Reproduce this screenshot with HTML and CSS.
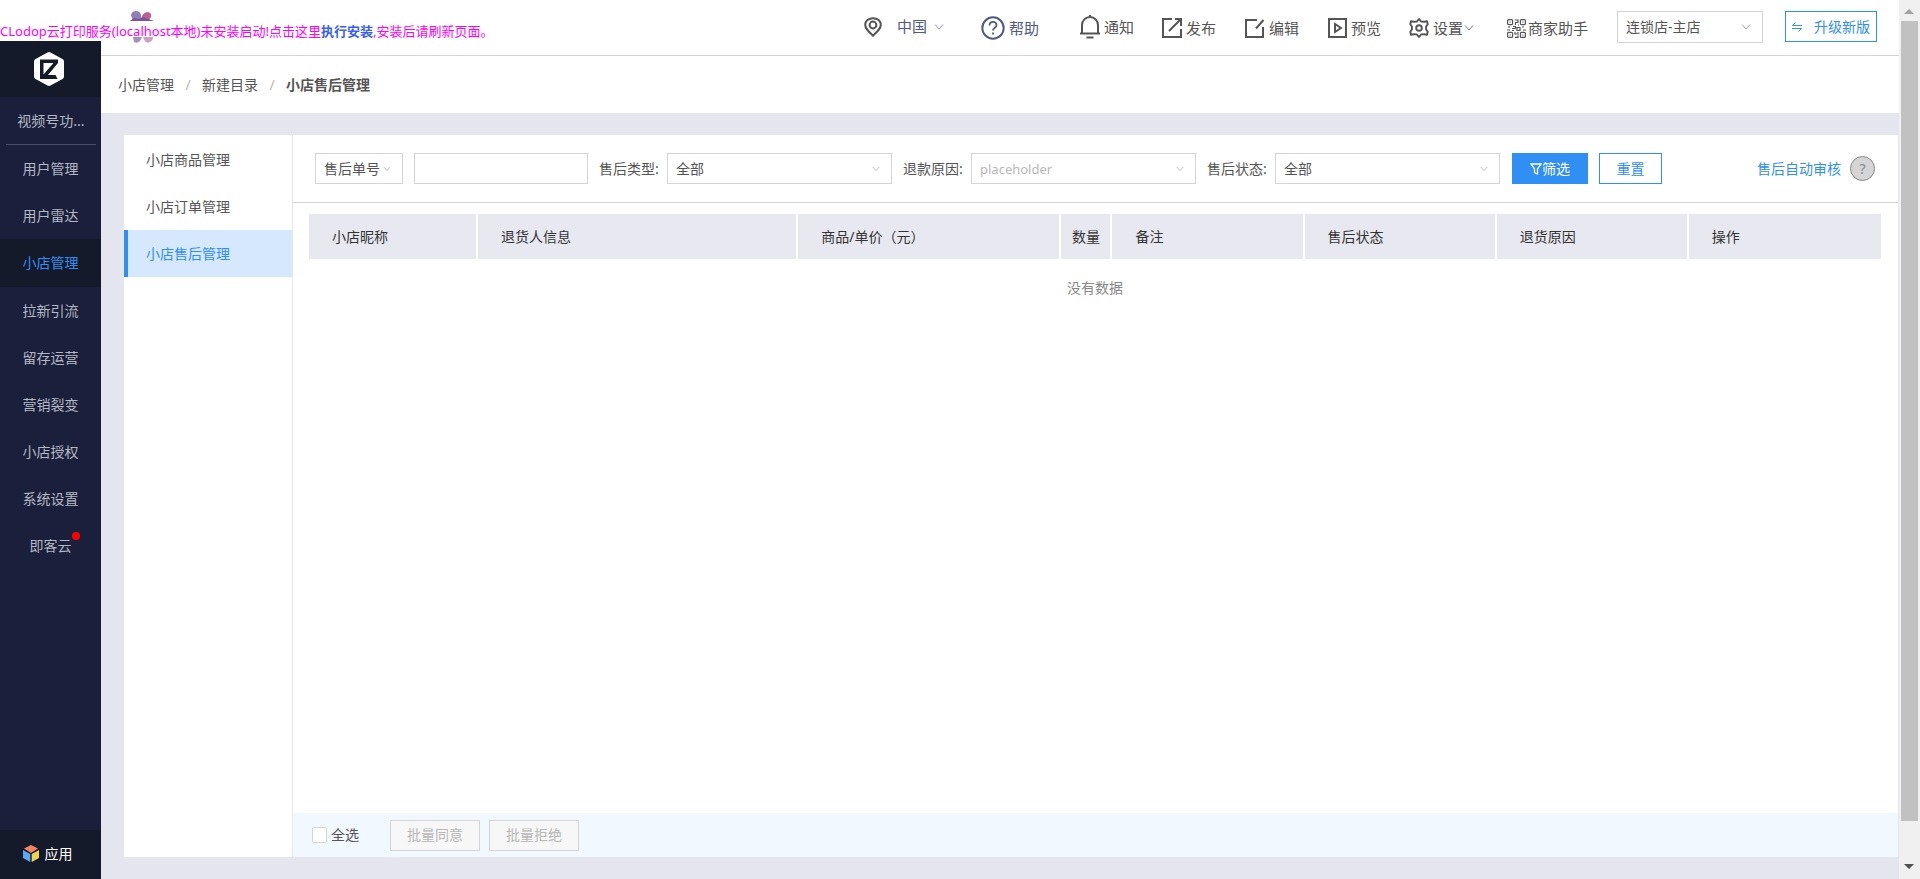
FILE: index.html
```html
<!DOCTYPE html>
<html lang="zh-CN">
<head>
<meta charset="utf-8">
<title>小店售后管理</title>
<link rel="stylesheet" href="styles.css">
</head>
<body>
<div class="app">
  <aside class="sidebar">
    <div class="logo">
      <svg width="30" height="34" viewBox="0 0 30 34"><path d="M13.500.500q1.500-.800 3 0L28.500 7Q30 7.800 30 9.500v15q0 1.700-1.500 2.500l-12 6.500q-1.500.800-3 0L1.500 27Q0 26.200 0 24.500v-15Q0 7.800 1.500 7z" fill="#fff"/><path d="M7 7.500h17v3.500L14 23h7.500l2 4H6V7.500z" fill="#141a29"/><path d="M9.500 11h10L9.500 22.500z" fill="#fff"/></svg>
    </div>
    <nav class="main-nav">
      <a class="nav-item nav-top" href="#">视频号功...</a>
      <a class="nav-item" href="#">用户管理</a>
      <a class="nav-item" href="#">用户雷达</a>
      <a class="nav-item active" href="#">小店管理</a>
      <a class="nav-item" href="#">拉新引流</a>
      <a class="nav-item" href="#">留存运营</a>
      <a class="nav-item" href="#">营销裂变</a>
      <a class="nav-item" href="#">小店授权</a>
      <a class="nav-item" href="#">系统设置</a>
      <a class="nav-item" href="#"><span class="dotted">即客云</span></a>
    </nav>
    <a class="apps" href="#">
      <svg width="16" height="17" viewBox="0 0 16 17"><path d="M8 0l7 3.500L8 8 1 3.500z" fill="#f4845f"/><path d="M0 5l7.300 4v8L0 13z" fill="#5aa9f7"/><path d="M16 5L8.700 9v8L16 13z" fill="#ecd64f"/></svg>
      应用
    </a>
  </aside>

  <div class="page">
    <header class="topbar">
      <button class="tool region" type="button">
        <svg width="18" height="20" viewBox="0 0 18 20" fill="none" stroke="#555" stroke-width="2"><path d="M9 18.700C4 14 1.200 11.500 1.200 7.800 1.200 4 4.500 1.200 9 1.200s7.800 2.800 7.800 6.600c0 3.700-2.800 6.200-7.800 10.900z"/><circle cx="9" cy="8" r="3.400"/></svg>
        <span class="region-name">中国</span>
        <svg class="chev" width="10" height="6" viewBox="0 0 10 6"><path d="M1 .500l4 4.500 4-4.500"/></svg>
      </button>
      <button class="tool help" type="button">
        <svg width="24" height="24" viewBox="0 0 24 24" fill="none" stroke="#525a80"><circle cx="12" cy="12" r="10.700" stroke-width="2"/><path d="M8.500 9.500C8.500 4.500 15.500 4.800 15.500 9c0 2.600-3.500 2.800-3.500 5.500M12 16.500v2" stroke-width="1.800"/></svg>
        帮助
      </button>
      <button class="tool notice" type="button">
        <svg width="20" height="24" viewBox="0 0 20 24" fill="none" stroke="#555" stroke-width="2"><path d="M2 18.500V10a8 8 0 0 1 16 0v8.500M0 18.500h20M10 0v3M6.500 22.500h7"/></svg>
        通知
      </button>
      <button class="tool publish" type="button">
        <svg width="20" height="20" viewBox="0 0 20 20" fill="none" stroke="#555" stroke-width="2"><path d="M10 1H1v18h18v-8M13 1h6v7M18.500 1.500L7 13"/></svg>
        发布
      </button>
      <button class="tool edit" type="button">
        <svg width="20" height="20" viewBox="0 0 20 20" fill="none" stroke="#555" stroke-width="2"><path d="M12 2H1v17h17V9M18.500 2L11 10.500"/></svg>
        编辑
      </button>
      <button class="tool preview" type="button">
        <svg width="19" height="20" viewBox="0 0 19 20" fill="none" stroke="#555" stroke-width="2"><path d="M1 1h17v18H1zM7 6l6 4-6 4z"/></svg>
        预览
      </button>
      <button class="tool setting" type="button">
        <svg width="20" height="20" viewBox="0 0 20 20" fill="none" stroke="#555" stroke-width="1.900" stroke-linejoin="round"><path d="M10 1l2.200 2.600 2.800.200 3-.500.700 2.900-1.600 2.300v3l1.600 2.300-.700 2.900-3-.500-2.800.200L10 19l-2.200-2.600-2.800-.200-3 .500-.700-2.900 1.600-2.300v-3L1.300 6.200 2 3.300l3 .500 2.800-.200z"/><circle cx="10" cy="10" r="2.800"/></svg>
        <span>设置</span>
        <svg class="chev" width="10" height="6" viewBox="0 0 10 6"><path d="M1 .500l4 4.500 4-4.500"/></svg>
      </button>
      <button class="tool helper" type="button">
        <svg width="19" height="19" viewBox="0 0 19 19" fill="none" stroke="#555" stroke-width="1.200"><rect x=".600" y=".600" width="5" height="5" rx="1"/><rect x="13.400" y=".600" width="5" height="5" rx="1"/><rect x=".600" y="13.400" width="5" height="5" rx="1"/><rect x="13.400" y="13.400" width="5" height="5" rx="1"/><path d="M2.500 3h1.200M15.300 3h1.200M2.500 16h1.200M15.300 16h1.200M8 1h3v2.500H8.500V6M11 6h1M1 8h2M6 7.500h2.500v2H5M0 11h3M5 11.500h2M10 8.500h3v3h-3zM15 8h2M16 11h3M8 13v2h3v-2M8 18.300h3v-2"/></svg>
        商家助手
      </button>
      <span class="select store">
        <select aria-label="店铺"><option>连锁店-主店</option></select>
        <svg class="chev" width="10" height="6" viewBox="0 0 10 6"><path d="M1 .500l4 4.500 4-4.500"/></svg>
      </span>
      <button class="btn upgrade" type="button">
        <svg width="10" height="10" viewBox="0 0 10 10" fill="none" stroke="#2f8ff2"><path d="M3.500.500L.500 3.500H10M0 6.500h9.500l-3 3"/></svg>
        升级新版
      </button>
    </header>

    <nav class="crumbs" aria-label="面包屑">
      <a href="#">小店管理</a><span class="sep">/</span><a href="#">新建目录</a><span class="sep">/</span><strong>小店售后管理</strong>
    </nav>

    <main class="panel">
      <nav class="sub-nav">
        <a href="#">小店商品管理</a>
        <a href="#">小店订单管理</a>
        <a class="active" href="#">小店售后管理</a>
      </nav>
      <section class="content">
        <form class="filters">
          <span class="select kind">
            <select aria-label="单号类型"><option>售后单号</option></select>
            <svg class="chev" width="8" height="6" viewBox="0 0 10 6"><path d="M1 .500l4 4.500 4-4.500"/></svg>
          </span>
          <input class="number" type="text" aria-label="售后单号">
          <label for="type">售后类型:</label>
          <span class="select wide">
            <select id="type"><option>全部</option></select>
            <svg class="chev" width="8" height="6" viewBox="0 0 10 6"><path d="M1 .500l4 4.500 4-4.500"/></svg>
          </span>
          <label for="reason">退款原因:</label>
          <span class="select wide empty">
            <select id="reason"><option>placeholder</option></select>
            <svg class="chev" width="8" height="6" viewBox="0 0 10 6"><path d="M1 .500l4 4.500 4-4.500"/></svg>
          </span>
          <label for="state">售后状态:</label>
          <span class="select wide">
            <select id="state"><option>全部</option></select>
            <svg class="chev" width="8" height="6" viewBox="0 0 10 6"><path d="M1 .500l4 4.500 4-4.500"/></svg>
          </span>
          <button class="btn primary" type="button">
            <svg width="12" height="12" viewBox="0 0 12 12" fill="none" stroke="#fff" stroke-width="1.300"><path d="M1 1h10L7.500 6v5l-3-1.500V6z"/></svg>筛选
          </button>
          <button class="btn reset" type="reset">重置</button>
          <a class="auto" href="#">售后自动审核</a>
          <button class="tip" type="button" aria-label="帮助说明">?</button>
        </form>
        <div class="table-wrap">
          <table>
            <colgroup><col class="c-shop"><col class="c-user"><col class="c-goods"><col class="c-count"><col class="c-std"><col class="c-std"><col class="c-std"><col class="c-std"></colgroup>
            <thead>
              <tr><th>小店昵称</th><th>退货人信息</th><th>商品/单价（元）</th><th class="center">数量</th><th>备注</th><th>售后状态</th><th>退货原因</th><th>操作</th></tr>
            </thead>
            <tbody><tr><td colspan="8">没有数据</td></tr></tbody>
          </table>
        </div>
        <footer class="batch">
          <label class="check-all"><input type="checkbox">全选</label>
          <button class="btn" type="button" disabled>批量同意</button>
          <button class="btn" type="button" disabled>批量拒绝</button>
        </footer>
      </section>
    </main>
  </div>

  <div class="scrollbar" aria-hidden="true">
    <svg width="10" height="5" viewBox="0 0 10 5"><path d="M5 0l5 5H0z" fill="#a3a3a3"/></svg>
    <div class="thumb"></div>
    <svg width="10" height="5" viewBox="0 0 10 5"><path d="M0 0h10L5 5z" fill="#505050"/></svg>
  </div>

  <svg class="flower" width="24" height="34" viewBox="0 0 24 34"><path d="M1 5Q2 1 6 1q4 0 5 4v4l-3 1H4Q1 8 1 5z" fill="#8f7fbd"/><path d="M12 6q2-4 6-4 4 1 3 5l-2 3h-8z" fill="#c05f95"/><path d="M0 11l4-3 5 1 4-2 5 2 6 2z" fill="#7d5296"/><path d="M3 27h9l-2 4q-3 3-6 1z" fill="#a78fc4"/><path d="M13 27h10q0 4-4 5.500-4 1-6-5.500z" fill="#cf9fc4"/></svg>
  <p class="print-notice">CLodop云打印服务(localhost本地)未安装启动!点击这里<a href="#">执行安装</a>,安装后请刷新页面。</p>
</div>
</body>
</html>
```

FILE: styles.css
```css
* { box-sizing: border-box; }

body {
  margin: 0;
  font: 14px/20px "Noto Sans", "Noto Sans CJK SC", sans-serif;
  color: #555;
  background: #fff;
}

a { color: inherit; text-decoration: none; }

button, input, select { font: inherit; color: inherit; margin: 0; }

.app {
  position: relative;
  display: grid;
  grid-template-columns: 101px minmax(0, 1fr) 21px;
  min-height: 100vh;
}

/* sidebar */
.sidebar {
  display: flex;
  flex-direction: column;
  margin-top: 41px;
  background: #1a203b;
  color: #b4b8c3;
}

.logo {
  display: flex;
  align-items: center;
  justify-content: center;
  height: 56px;
  padding-right: 3px;
  background: #141a29;
}

.main-nav { flex: 1; }

.nav-item {
  display: flex;
  align-items: center;
  justify-content: center;
  height: 47px;
}

.nav-top {
  height: 48px;
  margin: 0 5px 0 6px;
  border-bottom: 1px solid #4a506a;
}

.nav-item.active { height: 48px; background: #141a29; color: #2f8ff2; }

.dotted { position: relative; }

.dotted::after {
  content: "";
  position: absolute;
  top: -4px;
  right: -8px;
  width: 8px;
  height: 8px;
  border-radius: 50%;
  background: #f00;
}

.apps {
  display: flex;
  align-items: center;
  justify-content: center;
  gap: 6px;
  height: 49px;
  padding-right: 6px;
  padding-bottom: 2px;
  background: #141a29;
  color: #fff;
}

/* header */
.page { display: flex; flex-direction: column; background: #e5e5ef; }

.topbar {
  display: flex;
  align-items: flex-start;
  justify-content: flex-end;
  height: 56px;
  padding: 11px 22px 0 0;
  border-bottom: 1px solid #d5d5d5;
  background: #fff;
}

.tool {
  display: flex;
  align-items: center;
  gap: 4px;
  height: 34px;
  padding: 0;
  border: 0;
  background: none;
  font-size: 15px;
  white-space: nowrap;
}

.region { height: 32px; margin-right: 37px; color: #525a80; }
.region-name { margin: 0 3px 2px 11px; }
.help { margin-right: 41px; color: #525a80; }
.notice { height: 32px; margin-right: 28px; }
.publish, .edit { margin-right: 29px; }
.preview { margin-right: 28px; }
.setting { margin-right: 33px; }
.setting .chev { margin-left: -3px; }
.helper { gap: 2px; margin-right: 29px; }

.chev { fill: none; stroke: #aaa; stroke-width: 1; }
.region .chev { stroke: #8f96b5; }
.setting .chev { stroke: #777; }

.select { position: relative; display: flex; }

.select select, .number {
  width: 100%;
  height: 31px;
  padding: 0 8px;
  border: 1px solid #d5d5d5;
  border-radius: 0;
  background: #fff;
  appearance: none;
}

.select .chev { position: absolute; right: 12px; top: 13px; pointer-events: none; }

.store { width: 146px; margin-right: 22px; }
.store select { height: 32px; }

.btn {
  height: 31px;
  padding: 0;
  border: 1px solid #2f8ff2;
  background: #fff;
  color: #2f8ff2;
  white-space: nowrap;
}

.upgrade { display: flex; align-items: center; justify-content: center; gap: 12px; width: 92px; }

.crumbs {
  display: flex;
  align-items: center;
  height: 57px;
  padding: 1px 0 0 17px;
  background: #fff;
}

.crumbs .sep { width: 28px; text-align: center; color: #b5b5b5; }
.crumbs strong { font-weight: 600; }

/* panel */
.panel {
  flex: 1;
  display: flex;
  margin: 22px 1px 22px 23px;
  background: #fff;
}

.sub-nav { width: 169px; padding-top: 1px; border-right: 1px solid #e5e5ef; }

.sub-nav a {
  display: flex;
  align-items: center;
  height: 47px;
  padding-left: 18px;
  border-left: 4px solid transparent;
}

.sub-nav a.active { border-color: #2f8ff2; background: #d5e8fd; color: #2f8ff2; }

.content { flex: 1; display: flex; flex-direction: column; min-width: 0; }

.filters {
  display: flex;
  align-items: center;
  height: 68px;
  padding: 0 23px 0 22px;
  border-bottom: 1px solid #d5d5d5;
}

.kind { width: 88px; margin-right: 11px; }
.number { width: 174px; }
.filters label { width: 79px; padding-left: 11px; white-space: nowrap; }
.wide { width: 225px; }
.empty select { color: #b8b8b8; font-size: 13px; }

.primary {
  display: flex;
  align-items: center;
  justify-content: center;
  width: 76px;
  margin: 0 11px 0 12px;
  background: #2f8ff2;
  color: #fff;
}

.reset { width: 63px; }
.auto { margin-left: auto; color: #2f8ff2; }

.tip {
  width: 25px;
  height: 25px;
  margin-left: 9px;
  padding: 0;
  border: 1px solid #888;
  border-radius: 50%;
  background: #d5d5d5;
  color: #888;
}

.table-wrap { flex: 1; padding: 11px 17px 0 16px; }

table { width: 100%; table-layout: fixed; border-collapse: separate; border-spacing: 0; }

.c-shop { width: 169px; }
.c-user { width: 320px; }
.c-goods { width: 263px; }
.c-count { width: 51px; }
.c-std { width: 192px; }

th {
  height: 45px;
  padding: 0 0 0 23px;
  background: #e8e8f1;
  border-right: 2px solid #fff;
  color: #333;
  font-weight: 400;
  text-align: left;
}

th:last-child { border-right: 0; }
th.center { padding: 0; text-align: center; }

td { height: 58px; padding: 0; color: #888; text-align: center; }

.batch {
  display: flex;
  align-items: center;
  gap: 9px;
  height: 44px;
  padding-left: 19px;
  background: #f1f8ff;
}

.check-all { display: flex; align-items: center; gap: 4px; margin-right: 22px; }

.check-all input {
  width: 15px;
  height: 16px;
  border: 1px solid #d5d5d5;
  border-radius: 2px;
  background: #fff;
  appearance: none;
}

.batch .btn { width: 90px; border-color: #d5d5d5; background: #f7f7f7; color: #b8b8b8; }

/* scrollbar */
.scrollbar {
  display: flex;
  flex-direction: column;
  align-items: center;
  padding: 9px 1px 10px 0;
  background: #f0f0f0;
}

.thumb { flex: 1; width: 17px; margin: 7px 0 43px; background: #c1c1c1; }

/* print service notice */
.flower { position: absolute; left: 130px; top: 10px; }

.print-notice {
  position: absolute;
  left: 0;
  top: 21px;
  margin: 0;
  color: #f0f;
  font-size: 13px;
  white-space: nowrap;
}

.print-notice a { color: #3b62e6; font-weight: 700; }
```
